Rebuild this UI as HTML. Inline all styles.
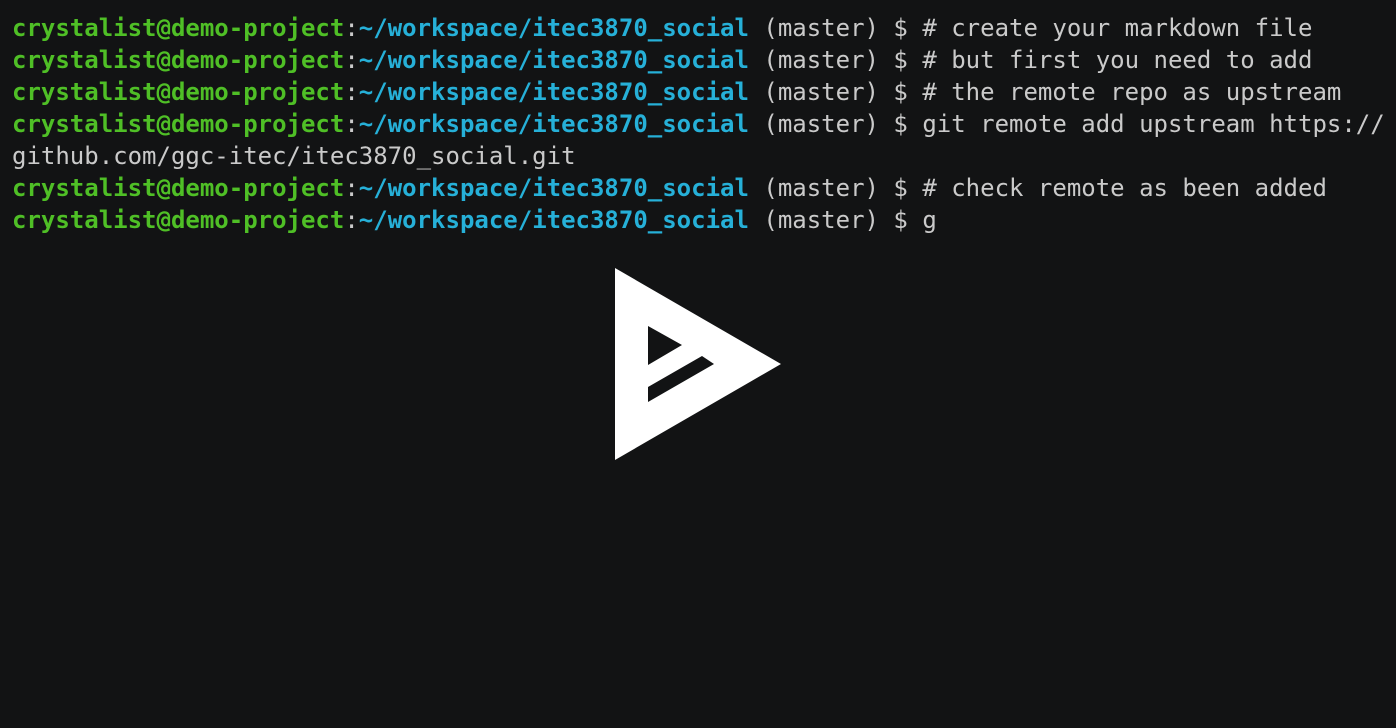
<!DOCTYPE html>
<html><head><meta charset="utf-8"><style>
html,body{margin:0;padding:0;background:#121314;width:1396px;height:728px;overflow:hidden}
pre{margin:0;position:absolute;left:12px;top:12px;font-family:"DejaVu Sans Mono","Liberation Mono",monospace;font-size:24px;line-height:32px;color:#cacaca;white-space:pre}
.g{color:#4fbf26;font-weight:bold}.b{color:#26b0d8;font-weight:bold}
svg{position:absolute;left:0;top:0}
</style></head><body>
<pre><span class="g">crystalist@demo-project</span>:<span class="b">~/workspace/itec3870_social</span> (master) $ # create your markdown file
<span class="g">crystalist@demo-project</span>:<span class="b">~/workspace/itec3870_social</span> (master) $ # but first you need to add
<span class="g">crystalist@demo-project</span>:<span class="b">~/workspace/itec3870_social</span> (master) $ # the remote repo as upstream
<span class="g">crystalist@demo-project</span>:<span class="b">~/workspace/itec3870_social</span> (master) $ git remote add upstream https://
github.com/ggc-itec/itec3870_social.git
<span class="g">crystalist@demo-project</span>:<span class="b">~/workspace/itec3870_social</span> (master) $ # check remote as been added
<span class="g">crystalist@demo-project</span>:<span class="b">~/workspace/itec3870_social</span> (master) $ g</pre>
<svg width="1396" height="728"><path fill="#fff" fill-rule="evenodd" d="M615 268L781 364L615 460Z M648 326L682 345L648 365Z M648 387L702 356L714 364L648 402Z"/></svg>
</body></html>
